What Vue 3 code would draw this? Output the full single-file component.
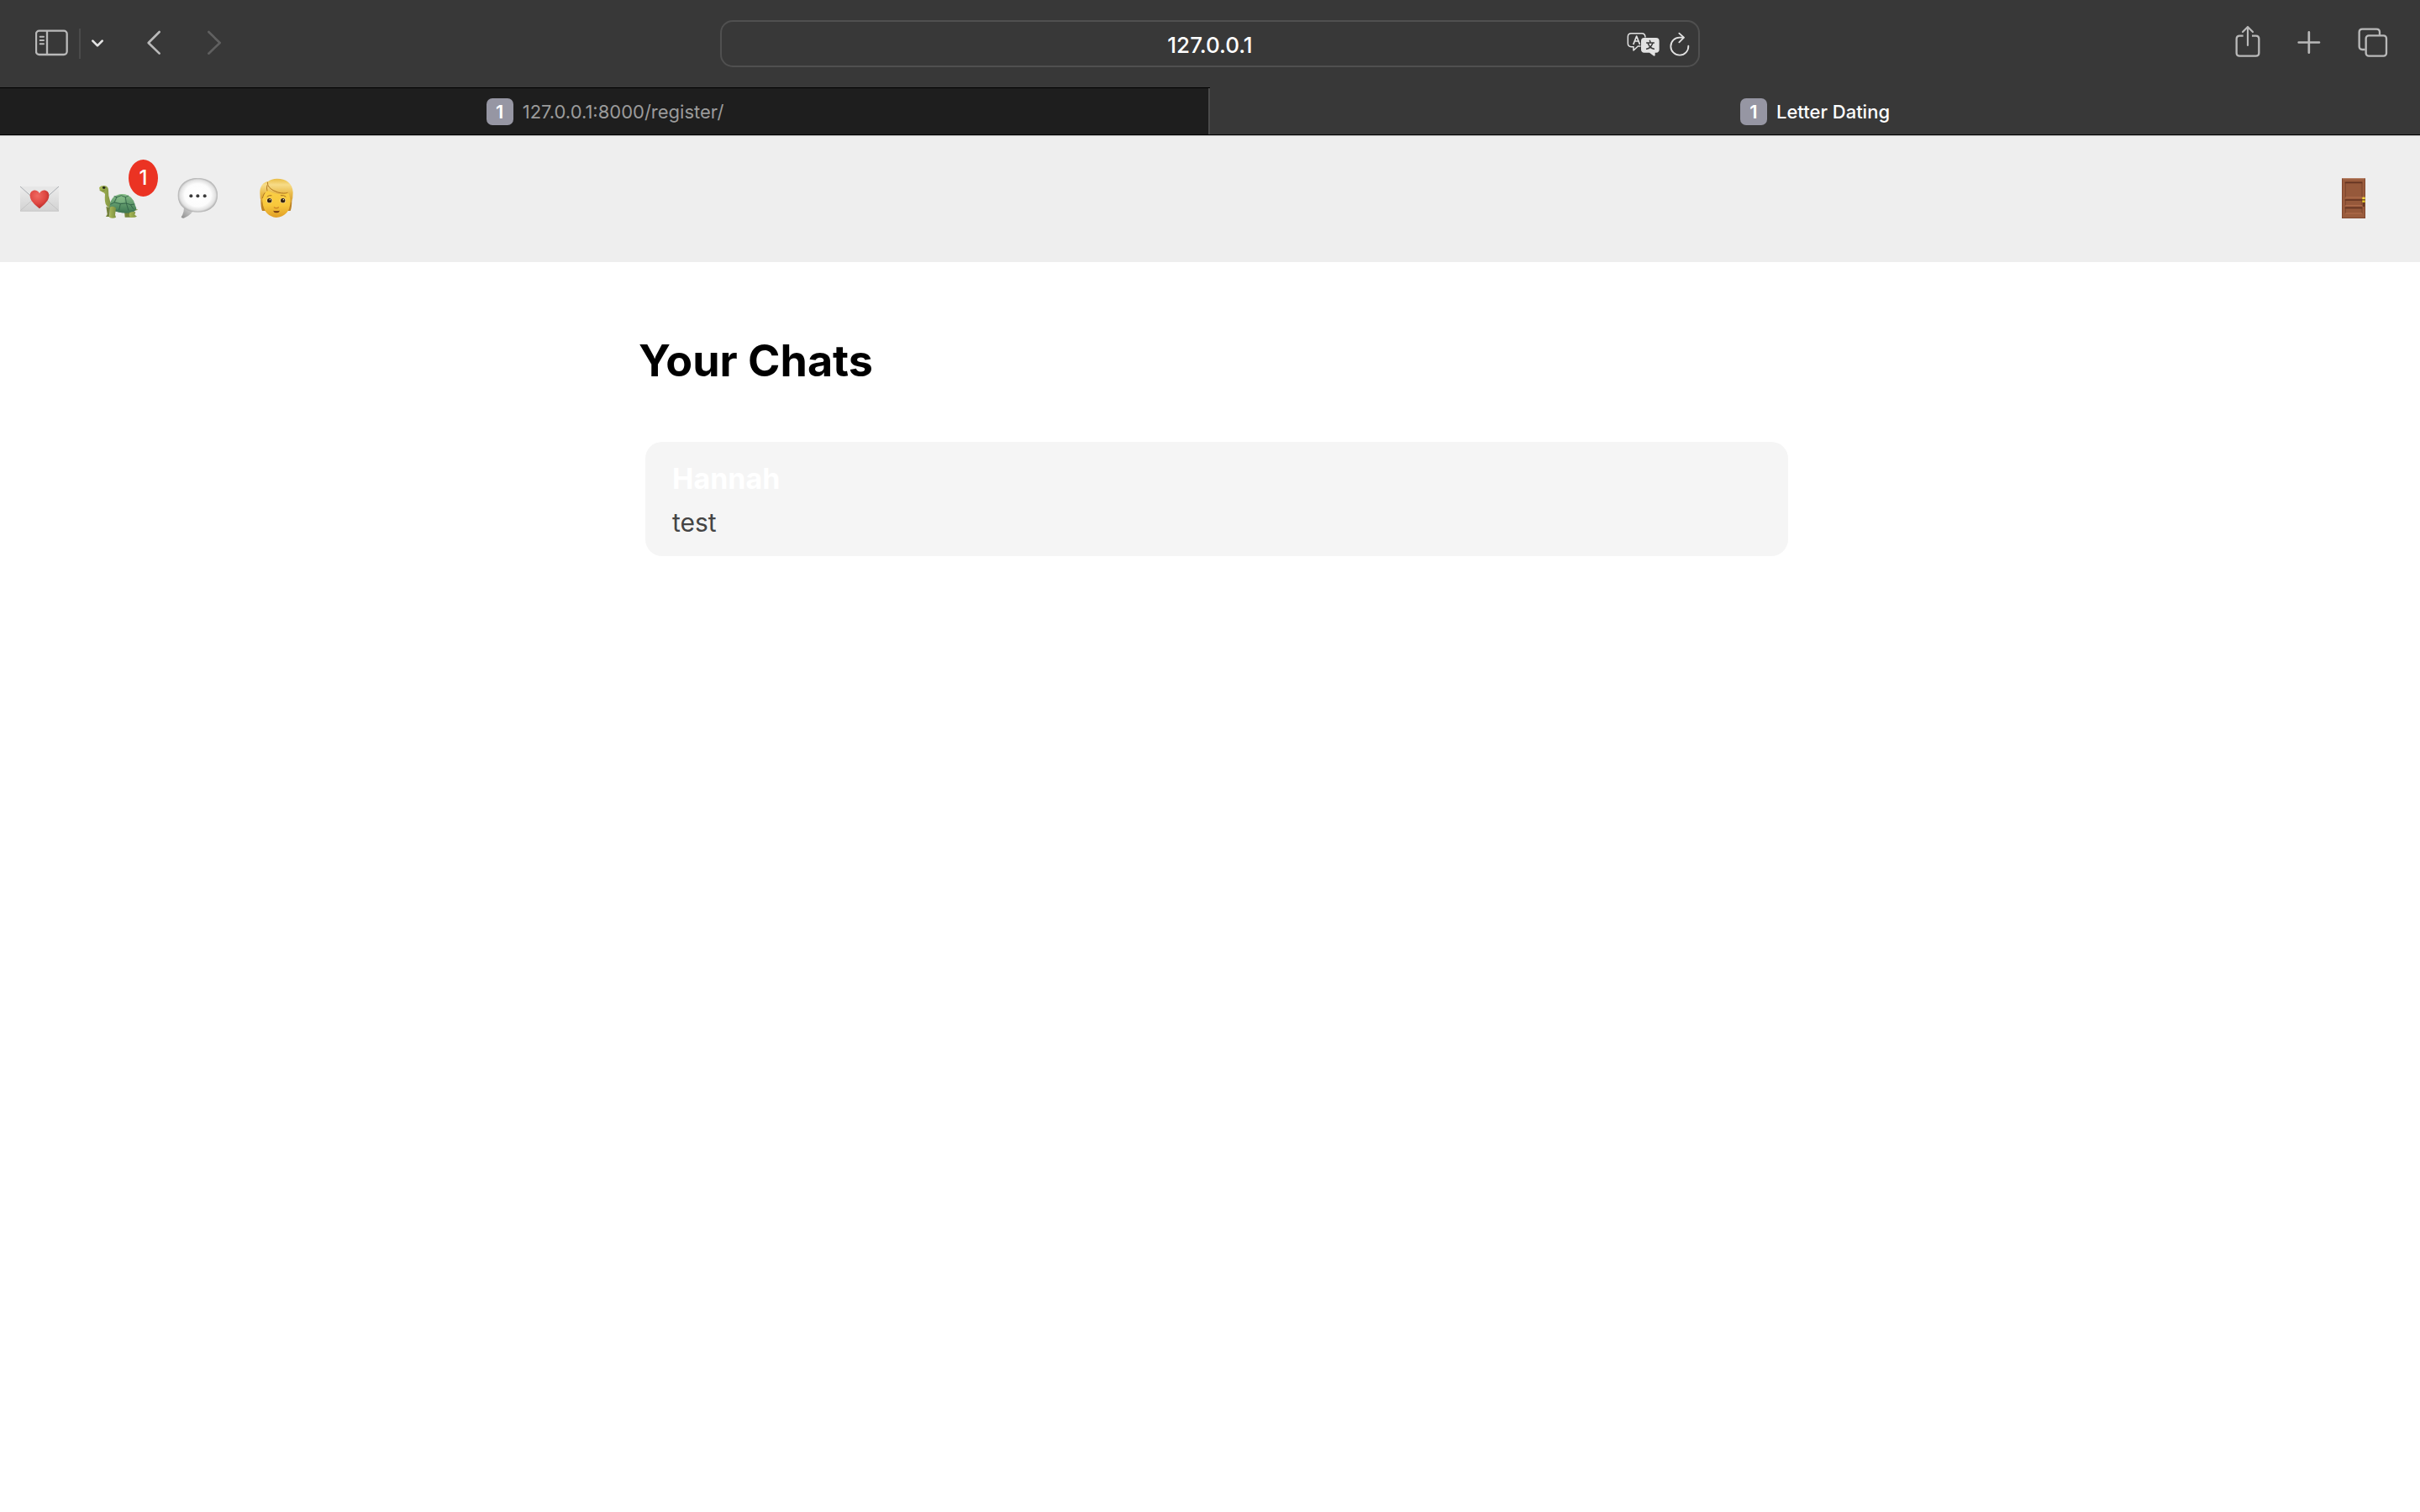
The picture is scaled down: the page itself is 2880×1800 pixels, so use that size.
<script setup>
import { ref } from 'vue'

const address = ref('127.0.0.1')
const chats = [{ id: 1, name: 'Hannah', preview: 'test' }]
</script>

<template>
  <div class="window">
    <header class="toolbar">
      <div class="group left">
        <button type="button" aria-label="Show sidebar">
          <svg width="40" height="48" viewBox="126 84 120 144" fill="none" stroke="#b9b9b9">
            <rect x="129" y="110" width="110" height="85" rx="11" stroke-width="7" />
            <path d="M168 110V195" stroke-width="7" />
            <path d="M143 131H156M143 144H156M143 157H156" stroke-width="6" stroke-linecap="round" />
          </svg>
        </button>
        <span class="divider"></span>
        <button type="button" class="menu" aria-label="Tab groups">
          <svg width="14" height="48" viewBox="327 84 42 144" fill="none" stroke="#e4e4e4" stroke-width="8" stroke-linecap="round" stroke-linejoin="round">
            <path d="M331 146L348 163L365 146" />
          </svg>
        </button>
        <button type="button" class="step" aria-label="Back">
          <svg width="18" height="48" viewBox="522 84 54 144" fill="none" stroke="#b9b9b9" stroke-width="8" stroke-linecap="round" stroke-linejoin="round">
            <path d="M569 114L530 153L569 191" />
          </svg>
        </button>
        <button type="button" class="step" aria-label="Forward" disabled>
          <svg width="18" height="48" viewBox="738 84 54 144" fill="none" stroke="#606060" stroke-width="8" stroke-linecap="round" stroke-linejoin="round">
            <path d="M745 114L785 153L745 191" />
          </svg>
        </button>
      </div>

      <div class="field">
        <input v-model="address" type="text" aria-label="Address" />
        <div class="field-tools">
          <button type="button" aria-label="Translate">
            <svg width="40" height="48" viewBox="106 84 120 144" fill="none" stroke="#e2e2e2" stroke-linecap="round" stroke-linejoin="round">
              <path d="M154 165H146L130 180V167H122Q110 166 110 155V131Q110 119 122 119H160Q171 119 172 132" stroke-width="4.5" />
              <path d="M130 157L141 129L152 157M134 147H148" stroke-width="5" />
              <path d="M168 135H211Q222 135 222 147V176Q222 187 211 188H207V198Q205 202 201 199L187 188H168Q157 187 157 176V147Q157 135 168 135Z" fill="#e2e2e2" stroke="none" />
              <path d="M188 145L190 150M177 153H203M182 155Q188 171 203 175M198 155Q192 171 177 175" stroke="#383838" stroke-width="4.5" />
            </svg>
          </button>
          <button type="button" aria-label="Reload">
            <svg width="24" height="48" viewBox="259 84 72 144" fill="none" stroke="#e2e2e2" stroke-width="5.5" stroke-linecap="round" stroke-linejoin="round">
              <path d="M326 164A31.5 31.5 0 1 1 295 134H310M293 119L310 134L293 151" />
            </svg>
          </button>
        </div>
      </div>

      <div class="group right">
        <button type="button" aria-label="Share">
          <svg width="30" height="48" viewBox="179 84 90 144" fill="none" stroke="#b9b9b9" stroke-width="7" stroke-linecap="round" stroke-linejoin="round">
            <path d="M208 128H195Q184 128 184 139V189Q184 200 195 200H253Q264 200 264 189V139Q264 128 253 128H239" stroke-linecap="butt" />
            <path d="M224 162V98M206 114L224 96L242 114" stroke-width="6.5" />
          </svg>
        </button>
        <button type="button" aria-label="New tab">
          <svg width="28" height="48" viewBox="401 84 84 144" fill="none" stroke="#b9b9b9" stroke-width="8" stroke-linecap="round">
            <path d="M406 151.500H479M442.500 115V188" />
          </svg>
        </button>
        <button type="button" aria-label="Tab overview">
          <svg width="36" height="48" viewBox="617 84 108 144" fill="none" stroke="#b9b9b9" stroke-width="7">
            <rect x="646" y="127" width="73" height="73" rx="10" />
            <path d="M643 177H633Q622 177 622 166V115Q622 104 633 104H684Q695 104 695 115V125" />
          </svg>
        </button>
      </div>
    </header>

    <div class="tabs" role="tablist">
      <button type="button" role="tab" class="tab" aria-selected="false">
        <span class="favicon">1</span>127.0.0.1:8000/register/
      </button>
      <button type="button" role="tab" class="tab active" aria-selected="true">
        <span class="favicon">1</span>Letter Dating
      </button>
    </div>

    <nav class="site-nav">
      <a href="#letters" aria-label="Letters">
        <svg width="48" height="48" viewBox="69 126 144 144">
          <defs>
            <linearGradient id="paper" x1="0" y1="0" x2="0" y2="1">
              <stop offset="0" stop-color="#ededed" />
              <stop offset="1" stop-color="#d2d2d2" />
            </linearGradient>
            <radialGradient id="heart" cx=".4" cy=".3" r=".7">
              <stop offset="0" stop-color="#f06a62" />
              <stop offset=".6" stop-color="#df4842" />
              <stop offset="1" stop-color="#b92b28" />
            </radialGradient>
          </defs>
          <rect x="72" y="155" width="138" height="89" rx="2" fill="url(#paper)" />
          <path d="M73 242L124 197M209 242L158 197" stroke="#c0c0c0" stroke-width="2.500" />
          <path d="M72 156L129 207Q141 217 153 207L210 156" fill="#e6e6e6" stroke="#a9adb2" stroke-width="3" />
          <path d="M72 244H210" stroke="#bdbdbd" stroke-width="2" />
          <path d="M141 235C124 220 107 207 107 188C107 167 133 163 141 181C149 163 175 167 175 188C175 207 158 220 141 235Z" fill="url(#heart)" />
        </svg>
      </a>
      <a href="#waiting" class="with-badge" aria-label="Waiting letters">
        <svg width="48" height="48" viewBox="351 126 144 144">
          <defs>
            <linearGradient id="shell" x1="0" y1="0" x2="0" y2="1">
              <stop offset="0" stop-color="#86bd88" />
              <stop offset="1" stop-color="#3d7852" />
            </linearGradient>
            <linearGradient id="skin" x1="0" y1="0" x2="1" y2="0">
              <stop offset="0" stop-color="#a9b957" />
              <stop offset="1" stop-color="#7d9040" />
            </linearGradient>
          </defs>
          <path d="M474 232L493 239L478 244Z" fill="#8e9a50" />
          <path d="M379 228L393 232L391 264H378L383 255Z" fill="#74823b" />
          <path d="M444 244H466L469 266H446Z" fill="#76863b" />
          <path d="M354 160Q360 152 373 153Q386 154 387 168Q386 190 393 208L401 232Q384 234 377 218Q373 207 375 184Q374 178 366 176L356 169Z" fill="url(#skin)" />
          <path d="M392 236Q389 215 402 197Q419 180 447 184Q475 191 482 221L487 234Q487 244 463 250Q424 253 392 236Z" fill="url(#shell)" />
          <path d="M392 228Q414 242 448 243Q475 243 485 233Q487 246 463 250Q424 253 392 237Z" fill="#437a56" />
          <path d="M394 220L408 213L430 218L451 216L466 221L481 219M408 213L417 194L433 188L448 194L451 216M417 194L407 191M448 194L459 189M430 218L425 240M451 216L459 242M466 221L476 236" fill="none" stroke="#2f5e44" stroke-width="2.500" />
          <path d="M420 197L432 192L444 198L446 212L430 214L413 210Z" fill="#8cc08c" opacity=".5" />
          <path d="M392 230Q405 224 414 233L411 257L414 266Q402 272 390 266L393 251Z" fill="url(#skin)" />
          <path d="M463 249Q475 245 484 247L481 257L489 263Q481 268 465 267L461 258Z" fill="url(#skin)" />
          <ellipse cx="371" cy="160" rx="5" ry="4.500" fill="#151a10" />
          <circle cx="372" cy="158" r="1.200" fill="#fff" />
          <path d="M356 170Q365 174 374 170" fill="none" stroke="#68762f" stroke-width="2" />
        </svg>
        <span class="badge">1</span>
      </a>
      <a href="#chats" aria-label="Chats">
        <svg width="48" height="48" viewBox="63 126 144 144">
          <defs>
            <radialGradient id="bubble" cx=".5" cy=".5" r=".52">
              <stop offset="0" stop-color="#fff" />
              <stop offset=".65" stop-color="#fcfcfc" />
              <stop offset=".87" stop-color="#e2e2e2" />
              <stop offset="1" stop-color="#a9a9a9" />
            </radialGradient>
            <linearGradient id="tail" x1="1" y1="0" x2="0" y2="1">
              <stop offset="0" stop-color="#dedede" />
              <stop offset="1" stop-color="#8d8d8d" />
            </linearGradient>
          </defs>
          <path d="M86 229Q89 248 77 265Q78 270 86 269Q107 262 119 244Z" fill="url(#tail)" />
          <path d="M136 127C177 127 206 151 206 187C206 224 179 247 136 247C95 247 66 226 66 188C66 151 94 127 136 127Z" fill="url(#bubble)" stroke="#b4b4b4" stroke-width="2" />
          <g fill="#3c3c3c">
            <circle cx="112" cy="190" r="6" />
            <circle cx="136" cy="190" r="6" />
            <circle cx="161" cy="190" r="6" />
          </g>
        </svg>
      </a>
      <a href="#profile" aria-label="Profile">
        <svg width="48" height="48" viewBox="345 126 144 144">
          <defs>
            <linearGradient id="face" x1="0" y1="0" x2="0" y2="1">
              <stop offset="0" stop-color="#fbd148" />
              <stop offset=".6" stop-color="#f8c83c" />
              <stop offset="1" stop-color="#e09e27" />
            </linearGradient>
            <linearGradient id="hair" x1="0" y1="0" x2="0" y2="1">
              <stop offset="0" stop-color="#e9bd45" />
              <stop offset=".25" stop-color="#f7dc88" />
              <stop offset=".6" stop-color="#e9bb4a" />
              <stop offset="1" stop-color="#d0962c" />
            </linearGradient>
          </defs>
          <path d="M361 205Q361 231 366 243H382L376 200ZM472 205Q472 231 467 243H452L458 200Z" fill="#bd8224" />
          <path d="M366 177Q364 225 378 245Q391 264 416 267Q443 265 457 245Q470 226 468 177Q440 148 391 157Z" fill="url(#face)" />
          <path d="M386 139C370 140 357 156 358 180Q357 200 365 216L369 190Q374 188 376 178L384 174L382 165Q392 179 421 183Q447 185 455 178Q463 181 464 193L469 216Q477 198 476 177C475 145 452 128 419 128Q399 128 386 139Z" fill="url(#hair)" />
          <path d="M385 140Q383 164 422 177Q447 183 457 178M384 151Q381 162 384 172M376 178Q370 184 367 198" fill="none" stroke="#b27823" stroke-width="3" />
          <path d="M384 192Q390 186 399 188M433 188Q443 186 450 192" fill="none" stroke="#a87020" stroke-width="3" stroke-linecap="round" />
          <ellipse cx="392" cy="206" rx="10" ry="9" fill="#f9e3ae" />
          <ellipse cx="440" cy="206" rx="10" ry="9" fill="#f9e3ae" />
          <circle cx="392" cy="206" r="8" fill="#35220f" />
          <circle cx="440" cy="206" r="8" fill="#35220f" />
          <circle cx="394" cy="203" r="2" fill="#fff" />
          <circle cx="442" cy="203" r="2" fill="#fff" />
          <path d="M409 231Q417 236 424 231" fill="none" stroke="#cc8424" stroke-width="4" stroke-linecap="round" />
          <path d="M405 242Q417 246 429 242Q426 250 417 250Q408 250 405 242Z" fill="#6d3514" />
        </svg>
      </a>
      <a href="#logout" class="logout" aria-label="Log out">
        <svg width="48" height="48" viewBox="111 96 144 144">
          <rect x="141" y="96" width="84" height="144" fill="#9a5c3d" />
          <path d="M141 98H225" stroke="#b9866b" stroke-width="3" />
          <path d="M142.500 98V240M223.500 98V240M141 238.500H225" stroke="#7c452c" stroke-width="2.500" />
          <g stroke-width="3">
            <path d="M154 165V112H213V165M154 194V175H213V194M154 222V203H213V222" fill="#96593b" stroke="#7b452d" />
            <path d="M152 112H214M152 174H214M152 202H214" stroke="#653522" stroke-width="5" />
            <path d="M154 165H213M154 194H213M154 222H213" stroke="#b4704e" />
          </g>
          <path d="M219 182V198" stroke="#5f3420" stroke-width="5" />
          <rect x="214" y="164" width="10" height="8" fill="#f7dc42" />
          <rect x="214" y="175" width="10" height="8" fill="#e3c52f" />
          <path d="M213 173.500H224" stroke="#6b491c" stroke-width="3" />
        </svg>
      </a>
    </nav>

    <main>
      <h1>Your Chats</h1>
      <ul>
        <li v-for="chat in chats" :key="chat.id">
          <a :href="'#chat-' + chat.id" class="name">{{ chat.name }}</a>
          <p>{{ chat.preview }}</p>
        </li>
      </ul>
    </main>
  </div>
</template>

<style>
body {
  margin: 0;
  background: #fff;
}
</style>

<style scoped>
.window {
  font-family: Inter, "Liberation Sans", sans-serif;
  color: #000;
}
button {
  padding: 0;
  border: 0;
  background: none;
  font: inherit;
  color: inherit;
}
svg {
  display: block;
}
.toolbar {
  display: grid;
  grid-template-columns: minmax(0, 857fr) minmax(0, 1166fr) minmax(0, 857fr);
  align-items: center;
  height: 104px;
  background: #383838;
}
.group {
  display: flex;
  align-items: center;
}
.left {
  padding-left: 42px;
}
.right {
  justify-content: flex-end;
  gap: 44px;
  padding-right: 38px;
}
.divider {
  width: 2px;
  height: 36px;
  margin: 0 13px 0 12px;
  background: #4b4b4b;
}
.menu {
  margin-right: -3px;
}
.step {
  margin-left: 54px;
}
.field {
  position: relative;
}
.field input {
  display: block;
  box-sizing: border-box;
  width: 100%;
  height: 56px;
  padding: 2px 100px 0;
  border: 2px solid #505050;
  border-radius: 15px;
  outline: 0;
  background: #383838;
  font: 500 26px/32px Inter, "Liberation Sans", sans-serif;
  text-align: center;
  color: #fff;
}
.field-tools {
  position: absolute;
  top: 4px;
  right: 12px;
  display: flex;
  gap: 11px;
}
.tabs {
  display: grid;
  grid-template-columns: 1fr 1fr;
  height: 58px;
  box-sizing: border-box;
  border-bottom: 1px solid #bcbcbc;
  background: #383838;
}
.tab {
  display: flex;
  align-items: center;
  justify-content: center;
  gap: 11px;
  padding-top: 1px;
  border-bottom: 1px solid #000;
  font-size: 22px;
  line-height: 32px;
  color: #9b9b9b;
  background: #1e1e1e;
  box-shadow: inset 0 1px #000, inset -2px 0 #4b4b4b;
}
.tab.active {
  font-weight: 500;
  color: #fff;
  background: #383838;
  box-shadow: none;
}
.favicon {
  width: 32px;
  border-radius: 7px;
  background: #9696a3;
  font-weight: 600;
  color: #fff;
  text-align: center;
}
.site-nav {
  display: flex;
  gap: 46px;
  padding: 50px 55px 52px 23px;
  background: #eee;
}
.with-badge {
  position: relative;
}
.badge {
  position: absolute;
  left: 36px;
  top: -22px;
  width: 35px;
  border-radius: 50%;
  background: #eb3323;
  font-size: 24px;
  line-height: 44px;
  font-weight: 500;
  color: #fff;
  text-align: center;
}
.logout {
  margin-left: auto;
}
main {
  max-width: 1360px;
  margin: 0 auto;
  padding-top: 84px;
}
h1 {
  margin: 0 0 62px;
  font-size: 52px;
  line-height: 68px;
  font-weight: 700;
}
ul {
  margin: 0 -8px 0 8px;
  padding: 0;
  list-style: none;
}
li {
  padding: 20px 32px 16px;
  border-radius: 20px;
  background: #f5f5f5;
}
.name {
  display: block;
  font-size: 34px;
  line-height: 48px;
  font-weight: 700;
  color: #fff;
  text-decoration: none;
}
p {
  margin: 4px 0 0;
  font-size: 30px;
  line-height: 48px;
  color: #444;
}
</style>
